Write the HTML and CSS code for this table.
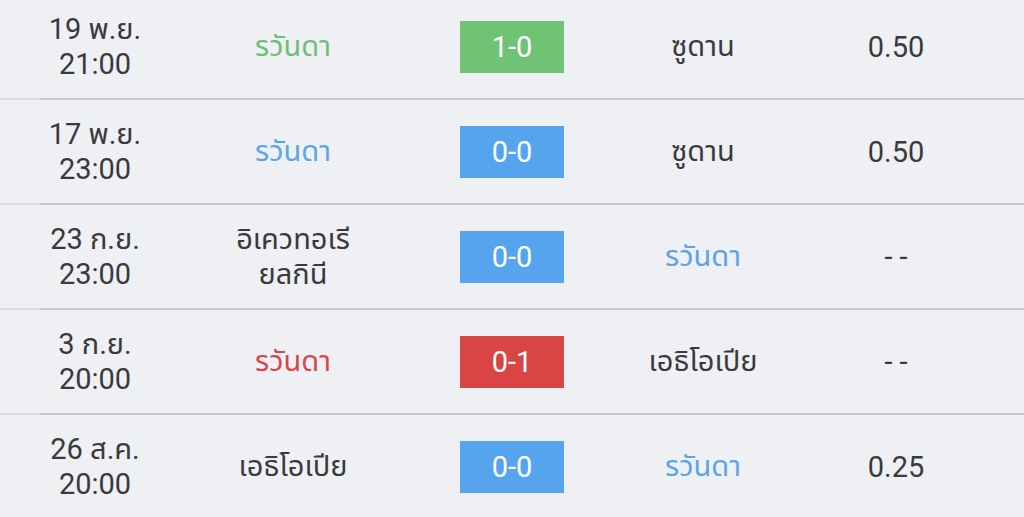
FILE: index.html
```html
<!DOCTYPE html>
<html lang="th">
<head>
<meta charset="utf-8">
<link rel="stylesheet" href="styles.css">
</head>
<body>
<div class="list">
  <div class="row">
    <div class="date">19 พ.ย.<br>21:00</div>
    <div class="team win">รวันดา</div>
    <div class="score"><span class="box g">1-0</span></div>
    <div class="team">ซูดาน</div>
    <div class="odds">0.50</div>
  </div>
  <div class="sep"></div>
  <div class="row">
    <div class="date">17 พ.ย.<br>23:00</div>
    <div class="team draw">รวันดา</div>
    <div class="score"><span class="box b">0-0</span></div>
    <div class="team">ซูดาน</div>
    <div class="odds">0.50</div>
  </div>
  <div class="sep"></div>
  <div class="row">
    <div class="date">23 ก.ย.<br>23:00</div>
    <div class="team">อิเควทอเรี<br>ยลกินี</div>
    <div class="score"><span class="box b">0-0</span></div>
    <div class="team draw">รวันดา</div>
    <div class="odds">- -</div>
  </div>
  <div class="sep"></div>
  <div class="row">
    <div class="date">3 ก.ย.<br>20:00</div>
    <div class="team lose">รวันดา</div>
    <div class="score"><span class="box r">0-1</span></div>
    <div class="team">เอธิโอเปีย</div>
    <div class="odds">- -</div>
  </div>
  <div class="sep"></div>
  <div class="row">
    <div class="date">26 ส.ค.<br>20:00</div>
    <div class="team">เอธิโอเปีย</div>
    <div class="score"><span class="box b">0-0</span></div>
    <div class="team draw">รวันดา</div>
    <div class="odds">0.25</div>
  </div>
</div>
</body>
</html>
```
FILE: styles.css
```css
html, body {
  margin: 0;
  padding: 0;
  background: #eff0f4;
  overflow: hidden;
}
body {
  font-family: "Roboto", "Noto Sans Thai", "Noto Sans", sans-serif;
  color: #3a3a3c;
  font-size: 29px;
}
.list {
  margin-top: -5px;
}
.row {
  height: 103px;
  display: grid;
  grid-template-columns: 190px 206px 232px 150px 236px;
  align-items: center;
  text-align: center;
}
.date {
  line-height: 35px;
}
.team {
  line-height: 35px;
}
.team.win { color: #6dbf73; }
.team.draw { color: #5aa5e6; }
.team.lose { color: #d9464a; }
.score {
  display: flex;
  justify-content: center;
}
.box {
  width: 104px;
  height: 52px;
  line-height: 52px;
  color: #ffffff;
  text-align: center;
}
.box.g { background: #70c274; }
.box.b { background: #56a3ee; }
.box.r { background: #d94444; }
.odds {
  white-space: pre;
}
.sep {
  height: 2px;
  background: linear-gradient(to right, #dcdce0 40px, #c8c8cc 40px);
}
```
